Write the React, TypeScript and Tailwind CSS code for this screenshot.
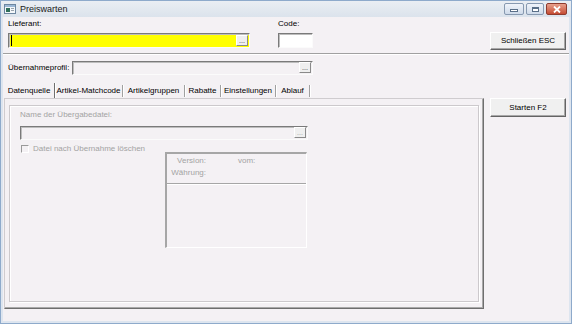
import React from "react";

type FieldProps = {
  width: string;
  height: string;
  bg: string;
  dots?: boolean;
  dim?: boolean;
  caret?: boolean;
};

function DotsButton({ dim }: { dim?: boolean }) {
  return (
    <div className="mb-[1px] mr-[1px] mt-auto flex h-[11px] w-[12px] items-end justify-center border border-t-white border-l-white border-r-[#8a8a8a] border-b-[#8a8a8a] bg-[#efefef]">
      <span className={`text-[7px] leading-[8px] ${dim ? "text-[#9a9a9a]" : "text-[#333]"}`}>...</span>
    </div>
  );
}

function Field({ width, height, bg, dots, dim, caret }: FieldProps) {
  return (
    <div
      className={`flex border border-t-[#7a7a7a] border-l-[#7a7a7a] border-r-[#fbfbfb] border-b-[#fbfbfb] shadow-[inset_1px_1px_0_#bdbdbd] ${width} ${height} ${bg}`}
    >
      <div className="flex flex-1 items-center pl-[2px]">
        {caret && <div className="h-[11px] w-px bg-black" />}
      </div>
      {dots && <DotsButton dim={dim} />}
    </div>
  );
}

function PushButton({ label, height }: { label: string; height: string }) {
  return (
    <div
      className={`flex w-[76px] items-center justify-center border border-t-white border-l-white border-r-[#646464] border-b-[#646464] bg-[#f0f0f0] shadow-[inset_-1px_-1px_0_#a8a8a8] ${height}`}
    >
      {label}
    </div>
  );
}

function Separator({ dark }: { dark?: boolean }) {
  return dark ? (
    <div className="h-[15px] w-px self-end bg-[#6f6f6f] shadow-[1px_0_0_#fff]" />
  ) : (
    <div className="mb-[1px] h-[12px] w-px self-end bg-[#a0a0a0] shadow-[1px_0_0_#fff]" />
  );
}

function Tab({ label, width }: { label: string; width: string }) {
  return (
    <div className={`flex items-center justify-center pt-[1px] ${width}`}>{label}</div>
  );
}

function TitleBar() {
  return (
    <div className="flex h-[16px] items-center bg-gradient-to-b from-[#eaeef3] to-[#dbe3ec] pl-[3px] pr-[4px]">
      <svg width="12" height="10" viewBox="0 0 12 10">
        <rect x="0.5" y="0.5" width="11" height="9" fill="#f4f7fa" stroke="#6d86a0" />
        <rect x="1" y="1" width="10" height="2" fill="#9cb8d6" />
        <rect x="2" y="4" width="4" height="4" fill="#2f6f5a" />
        <rect x="7" y="4" width="3" height="1" fill="#9aa4ae" />
        <rect x="7" y="6" width="3" height="1" fill="#9aa4ae" />
      </svg>
      <span className="ml-[4px] text-[9px] leading-[12px] text-[#1a1a1a]">Preiswarten</span>
      <div className="ml-auto flex items-center gap-[2px]">
        <div className="flex h-[12px] w-[20px] items-center justify-center rounded-[2px] border border-[#8799b0] bg-gradient-to-b from-[#f0f4fa] to-[#cfdbea]">
          <div className="mt-[3px] h-[3px] w-[8px] border border-[#5a6f88] bg-white" />
        </div>
        <div className="flex h-[12px] w-[18px] items-center justify-center rounded-[2px] border border-[#8799b0] bg-gradient-to-b from-[#f0f4fa] to-[#cfdbea]">
          <div className="h-[5px] w-[7px] border border-[#5a6f88] bg-white shadow-[inset_0_1px_0_#5a6f88]" />
        </div>
        <div className="flex h-[12px] w-[21px] items-center justify-center rounded-[2px] border border-[#8e3b2e] bg-gradient-to-b from-[#e8a08c] to-[#c44a32]">
          <svg width="8" height="7" viewBox="0 0 8 7">
            <path d="M1 0.5 L7 6.5 M7 0.5 L1 6.5" stroke="#fff" strokeWidth="1.8" />
          </svg>
        </div>
      </div>
    </div>
  );
}

export default function App() {
  return (
    <div className="flex h-[324px] w-[572px] flex-col border border-[#8eaacb] bg-[#dde5ef] font-['Liberation_Sans',Arial,sans-serif] text-[8px] leading-[10px] text-black">
      <TitleBar />
      <div className="mx-[2px] mb-[2px] flex flex-1 flex-col bg-[#f4f1f4]">
        {/* top row */}
        <div className="flex h-[36px] pl-[5px] pr-[3px]">
          <div className="flex w-[242px] flex-col">
            <div className="h-[16px] pt-[2px]">Lieferant:</div>
            <Field width="w-[242px]" height="h-[15px]" bg="bg-[#ffff00]" dots caret />
          </div>
          <div className="ml-[28px] flex flex-col">
            <div className="h-[16px] pt-[2px]">Code:</div>
            <Field width="w-[35px]" height="h-[15px]" bg="bg-white" />
          </div>
          <div className="ml-auto mt-[15px]">
            <PushButton label="Schließen ESC" height="h-[18px]" />
          </div>
        </div>
        <div className="h-[2px] border-t border-b border-t-[#a0a0a0] border-b-white" />

        {/* profile row */}
        <div className="mt-[6px] flex h-[14px] items-center pl-[5px]">
          <div className="w-[64px]">Übernahmeprofil:</div>
          <Field width="w-[241px]" height="h-[14px]" bg="bg-[#f4f1f4]" dots />
        </div>

        {/* tabs */}
        <div className="ml-[1px] mt-[8px] flex h-[15px]">
          <Tab label="Datenquelle" width="w-[50px]" />
          <Separator dark />
          <Tab label="Artikel-Matchcode" width="w-[67px]" />
          <Separator />
          <Tab label="Artikelgruppen" width="w-[61px]" />
          <Separator />
          <Tab label="Rabatte" width="w-[35px]" />
          <Separator />
          <Tab label="Einstellungen" width="w-[54px]" />
          <Separator />
          <Tab label="Ablauf" width="w-[33px]" />
          <Separator />
        </div>

        {/* main area */}
        <div className="flex">
          <div className="ml-[1px] flex h-[211px] w-[480px] border border-t-[#cfcccf] border-l-[#cfcccf] border-r-[#6e6e6e] border-b-[#6e6e6e] pb-[6px] pl-[4px] pr-[4px] pt-[6px] shadow-[inset_-1px_-1px_0_#a9a9a9]">
            <div className="flex flex-1 flex-col border border-[#ccc9cc] pl-[10px] text-[#a3a3a3] shadow-[inset_1px_1px_0_#fff,1px_1px_0_#fff]">
              <div className="mt-[4px]">Name der Übergabedatei:</div>
              <div className="mt-[6px]">
                <Field width="w-[288px]" height="h-[14px]" bg="bg-[#f4f1f4]" dots dim />
              </div>
              <div className="mt-[4px] flex h-[9px] items-center">
                <div className="ml-[1px] h-[8px] w-[8px] border border-t-[#9a9a9a] border-l-[#9a9a9a] border-r-white border-b-white bg-[#f4f1f4]" />
                <span className="ml-[4px]">Datei nach Übernahme löschen</span>
              </div>
              <div className="-mt-[1px] ml-[145px] flex h-[96px] w-[142px] flex-col border-t-2 border-l-2 border-r border-b border-t-[#a6a6a6] border-l-[#a6a6a6] border-r-white border-b-white">
                <div className="flex h-[29px] flex-col pt-[2px]">
                  <div className="flex">
                    <span className="w-[39px] text-right">Version:</span>
                    <span className="ml-[32px]">vom:</span>
                  </div>
                  <div className="mt-[2px] flex">
                    <span className="w-[39px] text-right">Währung:</span>
                  </div>
                </div>
                <div className="h-[2px] border-t border-b border-t-[#a6a6a6] border-b-white" />
              </div>
            </div>
          </div>
          <div className="ml-[6px]">
            <PushButton label="Starten F2" height="h-[19px]" />
          </div>
        </div>
      </div>
    </div>
  );
}
